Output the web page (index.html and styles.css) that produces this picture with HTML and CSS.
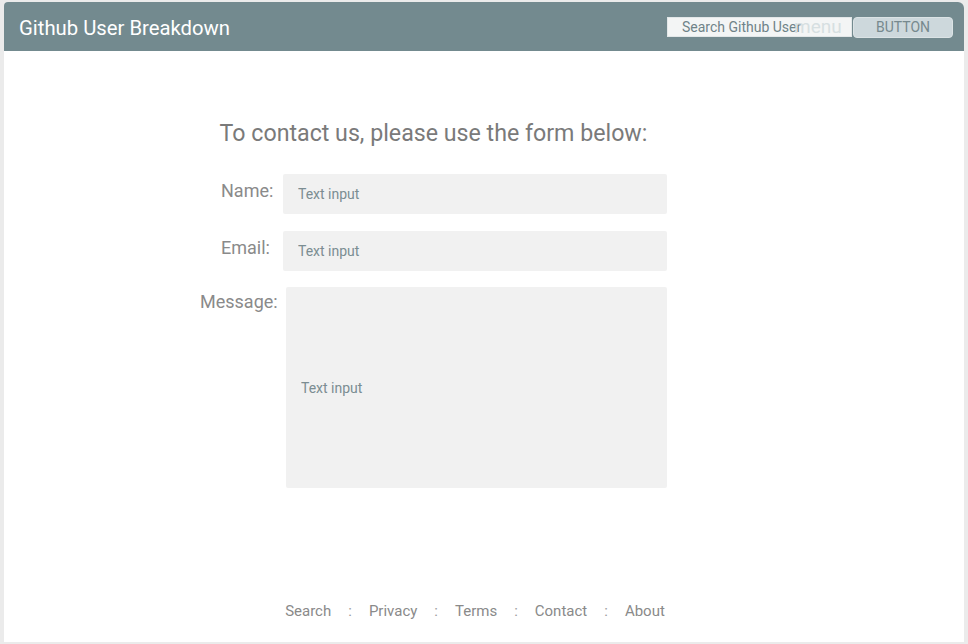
FILE: index.html
```html
<!DOCTYPE html>
<html>
<head>
<meta charset="utf-8">
<title>Github User Breakdown</title>
<link rel="stylesheet" href="styles.css">
</head>
<body>
<div class="page">
  <header class="topbar">
    <div class="brand">Github User Breakdown</div>
    <div class="tools">
      <div class="search-wrap">
        <input class="search" type="text" placeholder="Search Github User">
        <span class="menu-label">menu</span>
      </div>
      <button class="btn" type="button">BUTTON</button>
    </div>
  </header>
  <main class="content">
    <form class="contact">
      <h1 class="title">To contact us, please use the form below:</h1>
      <div class="rows">
        <div class="row">
          <label class="label">Name:</label>
          <input class="field" type="text" placeholder="Text input">
        </div>
        <div class="row row-email">
          <label class="label">Email:</label>
          <input class="field" type="text" placeholder="Text input">
        </div>
        <div class="row row-msg">
          <label class="label label-msg">Message:</label>
          <input class="field field-msg" type="text" placeholder="Text input">
        </div>
      </div>
    </form>
  </main>
  <footer class="footer">
    <a class="link">Search</a><span class="sep">:</span>
    <a class="link">Privacy</a><span class="sep">:</span>
    <a class="link">Terms</a><span class="sep">:</span>
    <a class="link">Contact</a><span class="sep">:</span>
    <a class="link">About</a>
  </footer>
</div>
</body>
</html>
```

FILE: styles.css
```css
html, body {
  margin: 0;
  padding: 0;
}
body {
  background: #ebebeb;
  font-family: Roboto, "Liberation Sans", sans-serif;
  padding: 2px 4px 2px 4px;
}
.page {
  background: #ffffff;
  width: 960px;
  height: 640px;
  display: flex;
  flex-direction: column;
  border-radius: 4px 6px 0 0;
  overflow: hidden;
}
.topbar {
  height: 49px;
  background: #738a8f;
  display: flex;
  align-items: center;
  justify-content: space-between;
  padding: 0 11px 0 15px;
  flex: none;
}
.brand {
  color: #ffffff;
  font-size: 20.3px;
  padding-top: 3px;
}
.tools {
  display: flex;
  align-items: center;
  padding-top: 1px;
}
.search-wrap {
  position: relative;
}
.search {
  width: 185px;
  height: 20px;
  box-sizing: border-box;
  border: 1px solid #e2e7e8;
  background: #f3f5f5;
  font-family: Roboto, "Liberation Sans", sans-serif;
  font-size: 14px;
  padding: 0 0 0 14px;
  margin: 0;
  outline: none;
  display: block;
}
.search::placeholder {
  color: #6f8388;
}
.menu-label {
  position: absolute;
  left: 127px;
  top: -1px;
  font-size: 19px;
  line-height: 22px;
  color: #d6dfe1;
}
.btn {
  width: 100px;
  height: 21px;
  margin: 0 0 0 1px;
  padding: 0;
  box-sizing: border-box;
  border: 1px solid #dbe3e5;
  border-radius: 4px;
  background: #cdd8dc;
  color: #76898e;
  font-family: Roboto, "Liberation Sans", sans-serif;
  font-size: 14px;
  line-height: 18px;
}
.content {
  flex: 1;
}
.contact {
  width: 467px;
  margin: 69px 0 0 196px;
}
.title {
  margin: 0;
  font-weight: normal;
  font-size: 23.2px;
  line-height: 27px;
  color: #7a7a7a;
  text-align: center;
}
.rows {
  margin-top: 27px;
  display: flex;
  flex-direction: column;
  gap: 17px;
}
.row {
  display: flex;
  align-items: flex-start;
}
.row-msg {
  margin-top: -1px;
}
.label {
  width: 83px;
  box-sizing: border-box;
  padding: 6px 0 0 21px;
  font-size: 18px;
  line-height: 21px;
  color: #8a8a8a;
  flex: none;
}
.label-msg {
  width: 86px;
  padding: 4px 0 0 0;
}
.field {
  flex: 1;
  height: 40px;
  box-sizing: border-box;
  border: none;
  border-radius: 2px;
  background: #f1f1f1;
  padding: 0 0 0 15px;
  margin: 0;
  font-family: Roboto, "Liberation Sans", sans-serif;
  font-size: 14px;
  outline: none;
}
.field::placeholder {
  color: #7b8d92;
}
.field-msg {
  height: 201px;
}
.footer {
  flex: none;
  display: flex;
  justify-content: center;
  align-items: center;
  padding: 0 18px 22px 0;
  font-size: 15px;
  line-height: 18px;
  color: #8a8a8a;
}
.link {
  color: #8a8a8a;
  text-decoration: none;
}
.sep {
  padding: 0 17px 0 17px;
  color: #9a9a9a;
}
```
